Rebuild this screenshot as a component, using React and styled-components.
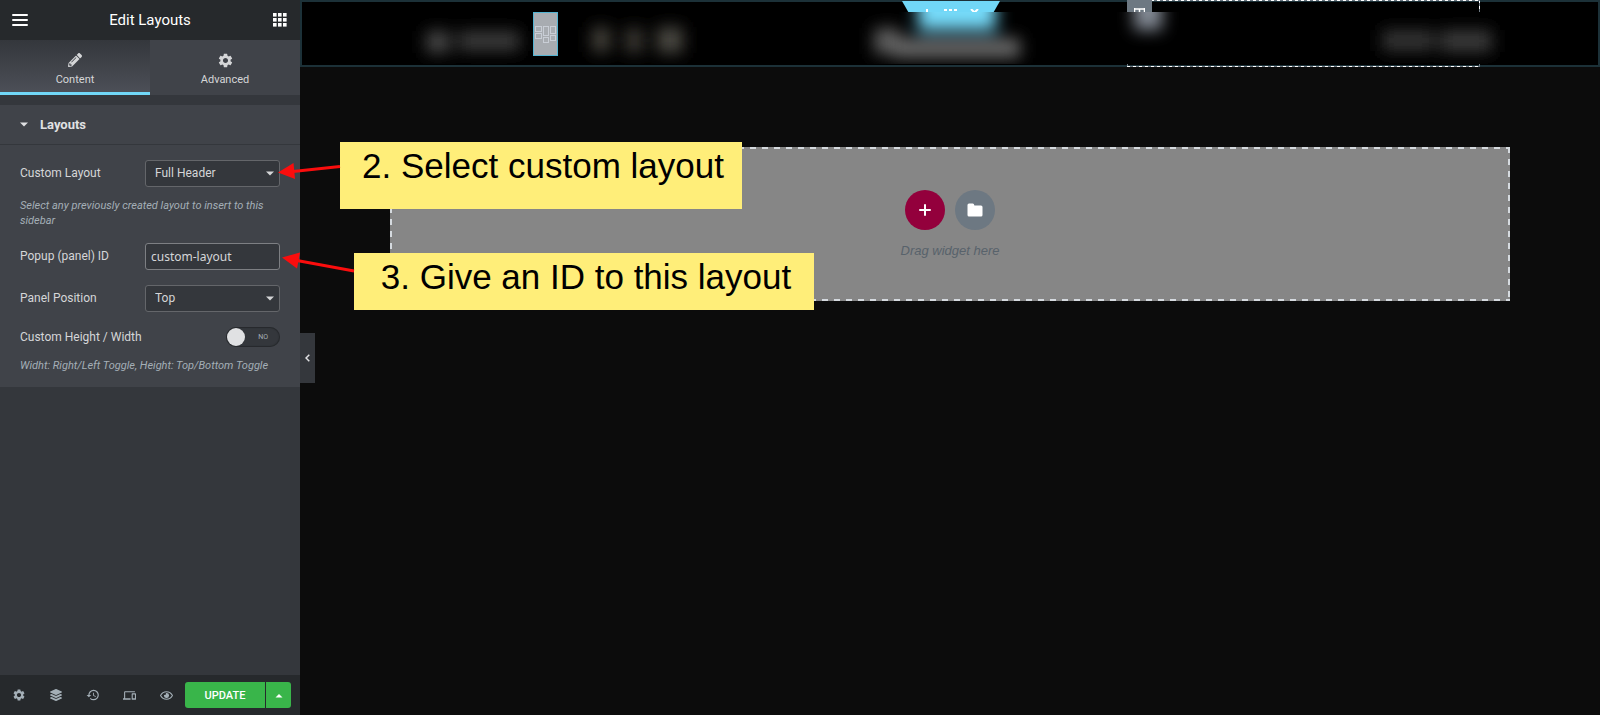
import React, {useState} from 'react';
import styled, {createGlobalStyle, css} from 'styled-components';
import {FaPencilAlt, FaLayerGroup, FaRegEye} from 'react-icons/fa';
import {MdSettings, MdHistory, MdDevices} from 'react-icons/md';


const GlobalStyle = createGlobalStyle`
    *, *::before, *::after {
        box-sizing: border-box;
    }

    body {
        margin: 0;
        background: #0c0c0c;
        font-family: Roboto, sans-serif;
        font-size: 12px;
        line-height: 15px;
        color: #e0e1e3;
    }

    button, input, select {
        margin: 0;
        padding: 0;
        border: 0;
        font: inherit;
        color: inherit;
        background: none;
    }

    svg {
        display: block;
    }
`

/* evenly spaced dashes on all four sides */
const dashes = (color, gap, size, width) => css`
    background-image:
        repeating-linear-gradient(90deg, ${color} 0 ${size}px, ${gap} ${size}px ${size * 2}px),
        repeating-linear-gradient(90deg, ${color} 0 ${size}px, ${gap} ${size}px ${size * 2}px),
        repeating-linear-gradient(${color} 0 ${size}px, ${gap} ${size}px ${size * 2}px),
        repeating-linear-gradient(${color} 0 ${size}px, ${gap} ${size}px ${size * 2}px);
    background-position: top, bottom, left, right;
    background-size: 100% ${width}px, 100% ${width}px, ${width}px 100%, ${width}px 100%;
    background-repeat: no-repeat;
`

const Page = styled.div`
    position: relative;
    display: grid;
    grid-template-columns: 300px 1fr;
    min-height: 100vh;
    overflow: hidden;
`

/* ---------- side panel ---------- */

const Panel = styled.aside`
    position: relative;
    display: flex;
    flex-direction: column;
    background: #34373c;
`

const PanelHeader = styled.header`
    display: flex;
    align-items: center;
    justify-content: space-between;
    height: 40px;
    padding: 0 12px;
    background: #26292c;
    color: #fff;
`

const Title = styled.h1`
    margin: 0;
    font-size: 15px;
    line-height: 20px;
    font-weight: 400;
`

const IconButton = styled.button`
    display: grid;
    place-items: center;
    min-width: 16px;
    height: 20px;
    color: ${props => props.$muted ? '#a4afb7' : '#fff'};
`

const Tabs = styled.nav`
    display: grid;
    grid-template-columns: 1fr 1fr;
    margin-bottom: 10px;
`

const Tab = styled.button`
    display: grid;
    grid-template-rows: 16px 15px;
    align-content: start;
    place-items: center;
    gap: 4px;
    height: 55px;
    padding-top: 12px;
    font-size: 11px;
    color: #d5d6d8;
    background: #404349;
    border-bottom: 3px solid #404349;

    ${props => props.$active && css`
        background: linear-gradient(#34373c, #4c4f57);
        border-bottom-color: #71d7f7;
    `}
`

const Section = styled.section`
    background: #404349;
    padding-bottom: 14px;
`

const SectionToggle = styled.button`
    display: flex;
    align-items: center;
    gap: 12px;
    width: 100%;
    height: 40px;
    padding: 0 20px;
    font-size: 13px;
    font-weight: 700;
    border-bottom: 1px solid #34373c;
`

const Controls = styled.div`
    display: flex;
    flex-direction: column;
    gap: 15px;
    padding: 15px 20px 0;
`

const Control = styled.div`
    display: flex;
    flex-direction: column;
    gap: 11px;
`

const Row = styled.div`
    display: flex;
    align-items: center;
    justify-content: space-between;
    color: #d5d6d8;
`

const Field = styled.div`
    position: relative;
    width: 135px;

    svg {
        position: absolute;
        right: 6px;
        top: 11px;
        pointer-events: none;
    }
`

const control = css`
    width: 100%;
    height: 27px;
    border: 1px solid #64666a;
    border-radius: 3px;
    background: #34373c;
    outline: none;
`

const Select = styled.select`
    ${control}
    appearance: none;
    padding: 0 9px;
`

const Input = styled.input`
    ${control}
    padding: 0 5px;
    border-color: #7d7f83;
    font-family: "Noto Sans", sans-serif;
`

const Hint = styled.p`
    margin: 0;
    font-size: 11px;
    font-style: italic;
    color: #a4afb7;
`

const Switch = styled.label`
    position: relative;
    display: flex;
    align-items: center;
    justify-content: flex-end;
    width: 54px;
    height: 20px;
    padding-right: 12px;
    border-radius: 10px;
    background: #34373c;
    box-shadow: inset 0 0 1px 1px #26292c;
    font-size: 7px;
    color: #a4afb7;

    input {
        position: absolute;
        inset: 0;
        opacity: 0;
    }

    &::before {
        content: '';
        position: absolute;
        top: 1px;
        left: ${props => props.$on ? '35px' : '1px'};
        width: 18px;
        height: 18px;
        border-radius: 50%;
        background: #e0e1e3;
    }
`

const PanelFooter = styled.footer`
    display: flex;
    align-items: center;
    height: 40px;
    margin-top: auto;
    padding-right: 9px;
    background: #26292c;
`

const Tools = styled.div`
    flex: 1;
    display: grid;
    grid-template-columns: repeat(5, 1fr);
`

const Publish = styled.div`
    display: grid;
    grid-template-columns: 80px 25px;
    gap: 1px;
    height: 26px;
    border-radius: 3px;
    overflow: hidden;

    button {
        display: grid;
        place-items: center;
        background: #39b54a;
        color: #fff;
        font-size: 11px;
        font-weight: 500;
    }
`

const Collapse = styled.button`
    position: absolute;
    left: 100%;
    top: 333px;
    display: grid;
    place-items: center;
    width: 15px;
    height: 50px;
    background: #34373c;
`

/* ---------- preview ---------- */

const Preview = styled.main`
    min-width: 0;
`

const SiteHeader = styled.div`
    position: relative;
    height: 67px;
    border: 2px solid #1c3138;
    background: #000;
`

const Handle = styled.div`
    position: absolute;
    top: -1px;
    left: 50%;
    display: flex;
    justify-content: center;
    width: 98px;
    height: 24px;
    margin-left: -48px;
    padding-top: 8px;
    background: #71d7f7;
    clip-path: polygon(0 0, 100% 0, 86% 100%, 14% 100%);
    color: #fff;
`

const Column = styled.div`
    position: absolute;
    top: -2px;
    bottom: -2px;
    right: 118px;
    width: 353px;
    ${dashes('#fff', '#6d7882', 3, 1)}
`

const ColumnHandle = styled.span`
    position: absolute;
    top: 0;
    left: 0;
    display: grid;
    justify-items: center;
    width: 25px;
    height: 25px;
    padding-top: 8px;
    background: #6d7882;
`

const Smudges = styled.svg`
    position: absolute;
    top: 10px;
    left: 0;
    width: 100%;
    height: 52px;
    background: #000;
`

const Widget = styled.div`
    position: absolute;
    top: 10px;
    left: 231px;
    display: grid;
    place-items: center;
    width: 25px;
    height: 44px;
    border: 1px solid #53b4d2;
    background: #a8acb1;
`

const DropZone = styled.section`
    display: flex;
    flex-direction: column;
    align-items: center;
    justify-content: center;
    gap: 12px;
    max-width: 1120px;
    height: 154px;
    margin: 80px auto 0;
    padding-top: 1px;
    background-color: #868686;
    ${dashes('#d5dadf', '#868686', 6, 2)}
    font-family: "Liberation Sans", sans-serif;
    font-size: 13px;
    font-style: italic;
    line-height: 18px;
    color: #58626b;
`

const Actions = styled.div`
    display: flex;
    gap: 10px;
`

const RoundButton = styled.button`
    display: grid;
    place-items: center;
    width: 40px;
    height: 40px;
    border-radius: 50%;
    background: ${props => props.$color};
`

/* ---------- tutorial notes ---------- */

const Note = styled.div`
    position: absolute;
    left: ${props => props.$left}px;
    top: ${props => props.$top}px;
    width: ${props => props.$width}px;
    height: ${props => props.$height}px;
    padding: 4px 0 0 4px;
    background: #ffee79;
    color: #000;
    font-family: "Liberation Sans", sans-serif;
    font-size: 35px;
    line-height: 40px;
    text-align: center;
    white-space: nowrap;
`

const Arrow = styled.svg`
    position: absolute;
    right: 100%;
    top: 0;
    overflow: visible;
`

const Caret = ({up}) => (
    <svg width='8' height='5' viewBox='0 0 8 5' aria-hidden='true'>
        <path d={up ? 'M0.5 4.5 4 1 7.5 4.5Z' : 'M0 0.5H8L4 4.5Z'} fill='currentColor'/>
    </svg>
)

const tools = [
    {label: 'Settings', icon: <MdSettings size={14}/>},
    {label: 'Navigator', icon: <FaLayerGroup size={12}/>},
    {label: 'History', icon: <MdHistory size={14}/>},
    {label: 'Responsive mode', icon: <MdDevices size={13}/>},
    {label: 'Preview changes', icon: <FaRegEye size={13}/>},
]

const WidgetIcon = () => (
    <svg width='23' height='18' viewBox='0 0 23 18' fill='none' stroke='#c9ced6' aria-hidden='true'>
        <rect x='1.5' y='1.5' width='6' height='5'/>
        <rect x='1.5' y='8.5' width='6' height='5'/>
        <rect x='9.5' y='1.5' width='5' height='9'/>
        <rect x='9.5' y='12.5' width='5' height='5'/>
        <rect x='16.5' y='1.5' width='5' height='7'/>
        <rect x='16.5' y='10.5' width='5' height='5'/>
    </svg>
)

const HeaderSmudges = () => (
    <Smudges viewBox='0 0 1296 52' preserveAspectRatio='xMidYMid slice' aria-hidden='true'>
        <defs>
            <filter id='soft' x='-10%' y='-100%' width='120%' height='300%'>
                <feGaussianBlur stdDeviation='8'/>
            </filter>
        </defs>
        <g filter='url(#soft)'>
            <rect x='124' y='19' width='24' height='22' fill='#474747'/>
            <rect x='156' y='19' width='62' height='20' fill='#3a3a3a'/>
            <rect x='290' y='15' width='18' height='25' fill='#47443e'/>
            <rect x='323' y='16' width='18' height='25' fill='#3d3a36'/>
            <rect x='355' y='15' width='26' height='26' fill='#4c4943'/>
            <rect x='572' y='16' width='26' height='26' fill='#5c5c5c'/>
            <rect x='590' y='26' width='128' height='20' fill='#686868'/>
            <rect x='616' y='-30' width='78' height='48' fill='#76daf9'/>
            <rect x='832' y='-24' width='28' height='42' fill='#868d98'/>
            <rect x='1080' y='18' width='52' height='21' fill='#363636'/>
            <rect x='1138' y='18' width='52' height='22' fill='#3b3b3b'/>
        </g>
    </Smudges>
)

const App = () => {
    const [tab, setTab] = useState('Content')
    const [open, setOpen] = useState(true)
    const [customSize, setCustomSize] = useState(false)

    return (
        <Page>
            <GlobalStyle/>
            <Panel>
                <PanelHeader>
                    <IconButton aria-label='Menu'>
                        <svg width='16' height='12' viewBox='0 0 16 12' stroke='currentColor' strokeWidth='2' strokeLinecap='round'>
                            <path d='M1 1H15M1 6H15M1 11H15'/>
                        </svg>
                    </IconButton>
                    <Title>Edit Layouts</Title>
                    <IconButton aria-label='Widgets'>
                        <svg width='14' height='14' viewBox='0 0 14 14' fill='currentColor'>
                            {[0, 5, 10].map(y => [0, 5, 10].map(x => (
                                <rect key={`${x}-${y}`} x={x} y={y} width='3.6' height='3.6'/>
                            )))}
                        </svg>
                    </IconButton>
                </PanelHeader>

                <Tabs>
                    <Tab $active={tab === 'Content'} onClick={() => setTab('Content')}>
                        <FaPencilAlt size={14}/>
                        Content
                    </Tab>
                    <Tab $active={tab === 'Advanced'} onClick={() => setTab('Advanced')}>
                        <MdSettings size={17}/>
                        Advanced
                    </Tab>
                </Tabs>

                <Section>
                    <SectionToggle onClick={() => setOpen(!open)}>
                        <Caret/>
                        Layouts
                    </SectionToggle>
                    {open && (
                        <Controls>
                            <Control>
                                <Row>
                                    <label htmlFor='layout'>Custom Layout</label>
                                    <Field>
                                        <Select id='layout'>
                                            <option>Full Header</option>
                                        </Select>
                                        <Caret/>
                                    </Field>
                                </Row>
                                <Hint>Select any previously created layout to insert to this sidebar</Hint>
                            </Control>
                            <Row>
                                <label htmlFor='panel-id'>Popup (panel) ID</label>
                                <Field>
                                    <Input id='panel-id' defaultValue='custom-layout'/>
                                </Field>
                            </Row>
                            <Row>
                                <label htmlFor='position'>Panel Position</label>
                                <Field>
                                    <Select id='position'>
                                        <option>Top</option>
                                    </Select>
                                    <Caret/>
                                </Field>
                            </Row>
                            <Control>
                                <Row>
                                    <label htmlFor='custom-size'>Custom Height / Width</label>
                                    <Switch $on={customSize}>
                                        <input
                                            id='custom-size'
                                            type='checkbox'
                                            checked={customSize}
                                            onChange={e => setCustomSize(e.target.checked)}
                                        />
                                        NO
                                    </Switch>
                                </Row>
                                <Hint>Widht: Right/Left Toggle, Height: Top/Bottom Toggle</Hint>
                            </Control>
                        </Controls>
                    )}
                </Section>

                <PanelFooter>
                    <Tools>
                        {tools.map(tool => (
                            <IconButton key={tool.label} $muted aria-label={tool.label}>{tool.icon}</IconButton>
                        ))}
                    </Tools>
                    <Publish>
                        <button>UPDATE</button>
                        <button aria-label='Save options'><Caret up/></button>
                    </Publish>
                </PanelFooter>

                <Collapse aria-label='Hide panel'>
                    <svg width='5' height='8' viewBox='0 0 5 8' fill='none' stroke='currentColor' strokeWidth='1.5'>
                        <path d='M4.3 0.7 1 4 4.3 7.3'/>
                    </svg>
                </Collapse>
            </Panel>

            <Preview>
                <SiteHeader>
                    <Handle>
                        <svg width='56' height='10' viewBox='0 0 56 10' stroke='currentColor' strokeWidth='2' fill='none'>
                            <path d='M4 0V9M0 5H8M21 1H24M26 1H29M31 1H34M21 5H24M26 5H29M31 5H34M48 0 55 7M55 0 48 7'/>
                        </svg>
                    </Handle>
                    <Column>
                        <ColumnHandle>
                            <svg width='11' height='10' viewBox='0 0 11 10' fill='none' stroke='#fff'>
                                <path d='M0.5 1H10.5M0.5 0V9.5H10.5V0M5.5 1V9' strokeWidth='1.5'/>
                            </svg>
                        </ColumnHandle>
                    </Column>
                    <HeaderSmudges/>
                    <Widget><WidgetIcon/></Widget>
                </SiteHeader>

                <DropZone>
                    <Actions>
                        <RoundButton $color='#93003c' aria-label='Add section'>
                            <svg width='12' height='12' viewBox='0 0 12 12' stroke='#fff' strokeWidth='2' strokeLinecap='round'>
                                <path d='M6 1V11M1 6H11'/>
                            </svg>
                        </RoundButton>
                        <RoundButton $color='#6d7882' aria-label='Add template'>
                            <svg width='16' height='14' viewBox='0 0 16 14' fill='#fff'>
                                <path d='M2 0.5H5.8Q7 0.5 7.4 2.5H14Q15.5 2.5 15.5 4V12Q15.5 13.5 14 13.5H2Q0.5 13.5 0.5 12V2Q0.5 0.5 2 0.5Z'/>
                            </svg>
                        </RoundButton>
                    </Actions>
                    Drag widget here
                </DropZone>
            </Preview>

            <Note $left={340} $top={142} $width={402} $height={67}>
                2. Select custom layout
                <Arrow width='62' height='40' viewBox='0 0 62 40' aria-hidden='true'>
                    <path d='M15 29.5 62 24.5' stroke='#fb0d0d' strokeWidth='3'/>
                    <path d='M0 30.5 15.5 21 17 37Z' fill='#fb0d0d'/>
                </Arrow>
            </Note>
            <Note $left={354} $top={253} $width={460} $height={57}>
                3. Give an ID to this layout
                <Arrow width='72' height='40' viewBox='0 0 72 40' aria-hidden='true'>
                    <path d='M15 7.5 72 18' stroke='#fb0d0d' strokeWidth='3'/>
                    <path d='M0 4.5 18 -0.5 15 15.5Z' fill='#fb0d0d'/>
                </Arrow>
            </Note>
        </Page>
    )
}

export default App;
